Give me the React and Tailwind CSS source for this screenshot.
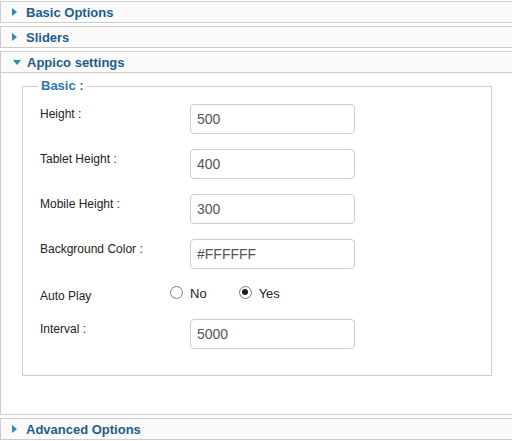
import { useState } from "react";

const font = { fontFamily: '"Liberation Sans", Arial, sans-serif' };

const PanelHeader = ({ title, open }) => (
  <div className="flex h-[22px] items-center border-y border-l border-[#cccccc] bg-[#fafafa] pl-[11px]">
    {open ? (
      <span className="mr-[6px] ml-[1px] h-0 w-0 border-x-[4px] border-t-[5px] border-x-transparent border-t-[#2b86c0]" />
    ) : (
      <span className="mr-[9px] h-0 w-0 border-y-[4px] border-l-[5px] border-y-transparent border-l-[#2b86c0]" />
    )}
    <span className="text-[13px] font-bold leading-none text-[#1d5d8c]">{title}</span>
  </div>
);

const TextRow = ({ label, value, last }) => (
  <div className={last ? "flex items-start" : "mb-[15px] flex items-start"}>
    <label className="w-[150px] pt-[3px] text-[12px] leading-[14px] text-[#222222]">{label}</label>
    <input
      defaultValue={value}
      className="h-[30px] w-[165px] rounded-[4px] border border-[#cccccc] bg-white px-[6px] text-[14px] text-[#555555] outline-none"
      style={font}
    />
  </div>
);

const Radio = ({ checked, label, onClick }) => (
  <button type="button" onClick={onClick} className="flex items-center">
    <span className="flex h-[13px] w-[13px] items-center justify-center rounded-full border border-[#7a7a7a] bg-white">
      {checked ? <span className="h-[6px] w-[6px] rounded-full bg-[#1f1f1f]" /> : null}
    </span>
    <span className="ml-[7px] pt-[3px] text-[13px] leading-none text-[#222222]">{label}</span>
  </button>
);

export default function App() {
  const [autoPlay, setAutoPlay] = useState(true);

  return (
    <div className="h-[441px] w-[512px] overflow-hidden bg-white pt-[1px]" style={font}>
      <PanelHeader title="Basic Options" />
      <div className="h-[3px]" />
      <PanelHeader title="Sliders" />
      <div className="h-[3px]" />
      <PanelHeader title="Appico settings" open />
      <div className="h-[342px] border-b border-l border-[#cccccc] pt-[5px]">
        <fieldset className="ml-[21px] w-[470px] border border-[#cccccc] px-[17px] pt-[10px] pb-[26px]">
          <legend className="ml-[-2px] px-[3px] text-[13px] font-bold leading-[16px] text-[#2a76b0]">
            Basic :
          </legend>
          <TextRow label="Height :" value="500" />
          <TextRow label="Tablet Height :" value="400" />
          <TextRow label="Mobile Height :" value="300" />
          <TextRow label="Background Color :" value="#FFFFFF" />
          <div className="mb-[15px] flex h-[20px] items-center">
            <span className="w-[130px] pt-[3px] text-[12px] leading-[14px] text-[#222222]">Auto Play</span>
            <div className="flex items-center gap-[32px] pb-[4px]">
              <Radio label="No" checked={!autoPlay} onClick={() => setAutoPlay(false)} />
              <Radio label="Yes" checked={autoPlay} onClick={() => setAutoPlay(true)} />
            </div>
          </div>
          <TextRow label="Interval :" value="5000" last />
        </fieldset>
      </div>
      <div className="h-[3px]" />
      <PanelHeader title="Advanced Options" />
    </div>
  );
}
